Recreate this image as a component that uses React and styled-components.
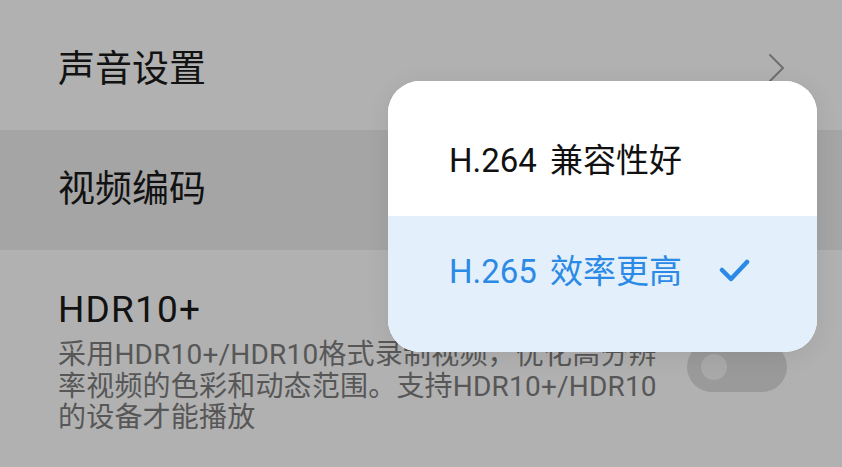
import React from "react";
import styled, { createGlobalStyle } from "styled-components";

const Global = createGlobalStyle`
  html, body { margin: 0; padding: 0; background: #b1b1b1; }
  body { font-family: Roboto, "Noto Sans CJK SC", sans-serif; }
`;

const Screen = styled.div`
  position: relative;
  width: 842px;
  height: 467px;
  overflow: hidden;
  background: #b1b1b1;
  display: flex;
  flex-direction: column;
`;

const Row = styled.div`
  display: flex;
  align-items: center;
  justify-content: space-between;
  box-sizing: border-box;
  height: ${(p) => p.$h}px;
  padding: ${(p) => p.$pt || 0}px 57px 0 58px;
  background: ${(p) => (p.$active ? "#a5a5a5" : "transparent")};
  flex-shrink: 0;
`;

const Title = styled.div`
  font-family: Roboto, "Noto Sans CJK SC", sans-serif;
  font-size: 37px;
  line-height: 48px;
  color: #121212;
  font-weight: 400;
  letter-spacing: ${(p) => (p.$latin ? "1.2px" : "0")};
`;

const DetailRow = styled.div`
  display: flex;
  align-items: flex-start;
  justify-content: space-between;
  padding: 36px 55px 0 58px;
`;

const DetailText = styled.div`
  display: flex;
  flex-direction: column;
  gap: 5px;
`;

const Desc = styled.div`
  font-family: Roboto, "Noto Sans CJK SC", sans-serif;
  font-size: 28px;
  line-height: 31.5px;
  color: #575757;
  white-space: nowrap;
  letter-spacing: 0.2px;
`;

const Toggle = styled.div`
  position: relative;
  margin-top: 56px;
  width: 100px;
  height: 50px;
  border-radius: 25px;
  background: #9a9a9a;
  flex-shrink: 0;
`;

const Knob = styled.div`
  position: absolute;
  left: 14px;
  top: 12px;
  width: 26px;
  height: 26px;
  border-radius: 50%;
  background: #a9a9a9;
`;

const Popup = styled.div`
  position: absolute;
  left: 388px;
  top: 81px;
  width: 429px;
  height: 271px;
  border-radius: 32px;
  overflow: hidden;
  background: #ffffff;
  box-shadow: 0 4px 24px rgba(0, 0, 0, 0.08);
  display: flex;
  flex-direction: column;
`;

const Option = styled.div`
  box-sizing: border-box;
  height: ${(p) => p.$h}px;
  padding: ${(p) => p.$pt}px 66px ${(p) => p.$pb}px 61px;
  display: flex;
  align-items: center;
  justify-content: space-between;
  background: ${(p) => (p.$selected ? "#e3f0fc" : "#ffffff")};
  color: ${(p) => (p.$selected ? "#2a8ae6" : "#111111")};
  font-family: Roboto, "Noto Sans CJK SC", sans-serif;
  font-size: 33px;
  line-height: 40px;
`;

const Label = styled.span`
  display: flex;
  gap: 13px;
  white-space: nowrap;
`;

const Chevron = () => (
  <svg width="18" height="30" viewBox="0 0 18 30" style={{ marginTop: -4 }}>
    <polyline
      points="3,2 16,15 3,28"
      fill="none"
      stroke="#6e6e6e"
      strokeWidth="2"
      strokeLinecap="round"
      strokeLinejoin="round"
    />
  </svg>
);

const Check = () => (
  <svg width="32" height="26" viewBox="0 0 32 26">
    <polyline
      points="3,11 12,20 28,3"
      fill="none"
      stroke="#2a8ae6"
      strokeWidth="4.5"
      strokeLinecap="round"
      strokeLinejoin="round"
    />
  </svg>
);

export default function App() {
  return (
    <>
      <Global />
      <Screen>
        <Row $h={130} $pt={10}>
          <Title>声音设置</Title>
          <Chevron />
        </Row>
        <Row $h={120} $active>
          <Title>视频编码</Title>
        </Row>
        <DetailRow>
          <DetailText>
            <Title $latin>HDR10+</Title>
            <div>
              <Desc>采用HDR10+/HDR10格式录制视频，优化高分辨</Desc>
              <Desc>率视频的色彩和动态范围。支持HDR10+/HDR10</Desc>
              <Desc>的设备才能播放</Desc>
            </div>
          </DetailText>
          <Toggle>
            <Knob />
          </Toggle>
        </DetailRow>
        <Popup>
          <Option $h={135} $pt={24} $pb={0}>
            <Label>
              <span>H.264</span>
              <span>兼容性好</span>
            </Label>
          </Option>
          <Option $h={136} $pt={0} $pb={24} $selected>
            <Label>
              <span>H.265</span>
              <span>效率更高</span>
            </Label>
            <Check />
          </Option>
        </Popup>
      </Screen>
    </>
  );
}
